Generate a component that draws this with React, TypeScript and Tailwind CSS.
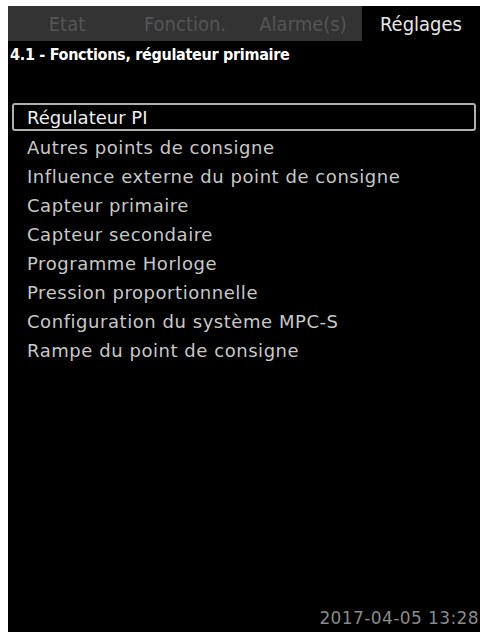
const tabs = ["Etat", "Fonction.", "Alarme(s)", "Réglages"];

const items = [
  "Autres points de consigne",
  "Influence externe du point de consigne",
  "Capteur primaire",
  "Capteur secondaire",
  "Programme Horloge",
  "Pression proportionnelle",
  "Configuration du système MPC-S",
  "Rampe du point de consigne",
];

export default function App() {
  return (
    <div className="h-[635px] w-[484px] bg-white pb-[3px] pl-[8px] pr-[4px] pt-[6px]">
      <div className="flex h-full flex-col bg-black font-['DejaVu_Sans',sans-serif]">
        <div className="grid h-[35px] grid-cols-4 [font-stretch:condensed]">
          {tabs.map((t, i) => (
            <div
              key={t}
              className={
                i === 3
                  ? "flex items-center justify-center bg-black text-[20px] text-[#e6e6e6]"
                  : "flex items-center justify-center bg-[#333333] text-[20px] text-[#555555]"
              }
            >
              {t}
            </div>
          ))}
        </div>
        <div className="pl-[2px] pt-[4px] text-[16px] font-bold leading-[20px] tracking-[-0.3px] text-white [font-stretch:condensed]">
          4.1 - Fonctions, régulateur primaire
        </div>
        <div className="mx-[4px] mt-[38px] flex h-[28px] items-center rounded-[3px] border-2 border-[#b0b0b0] pl-[13px] text-[18px] text-[#f0f0f0]">
          Régulateur PI
        </div>
        <ul className="mt-[2px] pl-[19px] text-[18px] leading-[29px] tracking-[0.55px] text-[#c8c8c8]">
          {items.map((it) => (
            <li key={it}>{it}</li>
          ))}
        </ul>
        <div className="mt-auto pb-[2px] pr-[1px] text-right text-[17px] leading-[24px] tracking-[0.4px] text-[#8a8a8a]">
          2017-04-05 13:28
        </div>
      </div>
    </div>
  );
}
